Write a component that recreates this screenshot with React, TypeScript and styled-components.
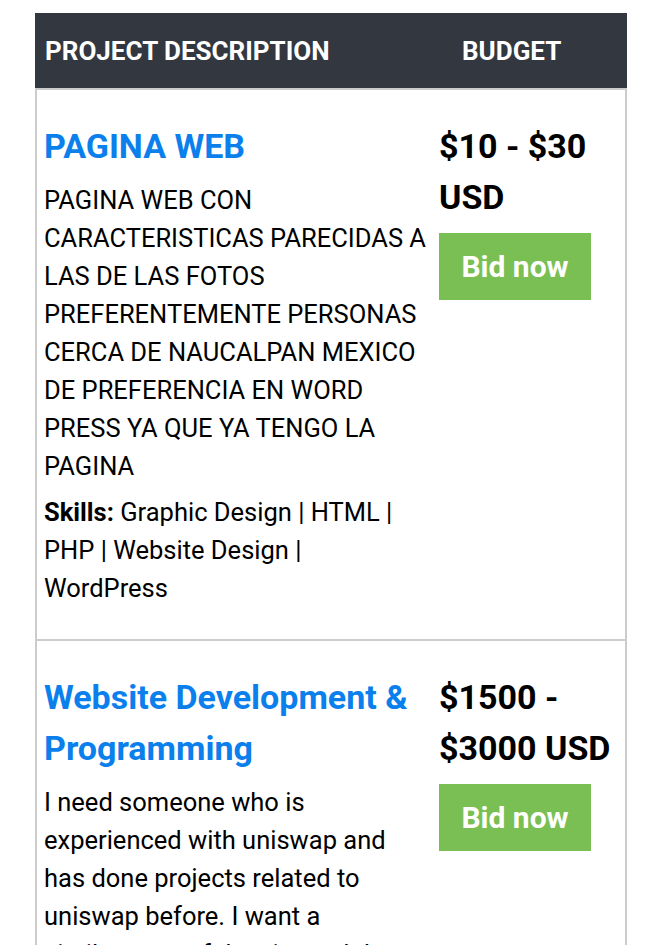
import React from "react";
import styled, { createGlobalStyle } from "styled-components";

const Global = createGlobalStyle`
  html, body { margin: 0; padding: 0; background: #ffffff; }
  body { font-family: Roboto, "Liberation Sans", Arial, sans-serif; color: #000; }
`;

const Page = styled.div`
  padding: 13px 22px 0 35px;
`;

const Table = styled.div`
  width: 592px;
  display: grid;
  grid-template-columns: 400px 192px;
`;

const HeadCell = styled.div<{ $pad: number }>`
  background: #333740;
  color: #ffffff;
  font-weight: 700;
  font-size: 26px;
  height: 76px;
  display: flex;
  align-items: center;
  padding-left: ${(p) => p.$pad}px;
`;

const Cell = styled.div<{ $left: boolean }>`
  border-left: ${(p) => (p.$left ? "2px solid #cccccc" : "none")};
  border-right: ${(p) => (p.$left ? "none" : "2px solid #cccccc")};
  border-top: 2px solid #cccccc;
  margin-top: -1px;
  padding-top: 31px;
  padding-bottom: 33px;
  padding-left: ${(p) => (p.$left ? "7px" : "4px")};
  padding-right: ${(p) => (p.$left ? "4px" : "6px")};
`;

const Title = styled.a`
  display: block;
  color: #0b7fec;
  font-weight: 700;
  font-size: 34px;
  line-height: 51px;
  text-decoration: none;
  margin-bottom: 9px;
`;

const Desc = styled.p<{ $max: number }>`
  margin: 0;
  max-width: ${(p) => p.$max}px;
  font-size: 25.5px;
  line-height: 38px;
`;

const Skills = styled.p`
  margin: 8px 0 0;
  font-size: 25.5px;
  line-height: 38px;
  b { font-weight: 700; }
`;

const Budget = styled.div`
  font-weight: 700;
  font-size: 34px;
  line-height: 51px;
`;

const BidButton = styled.button`
  margin-top: 10px;
  width: 152px;
  height: 67px;
  border: none;
  background: #79bf54;
  color: #ffffff;
  font-family: Roboto, "Liberation Sans", Arial, sans-serif;
  font-weight: 700;
  font-size: 30px;
  padding: 0;
  cursor: pointer;
`;

type Project = { title: string; desc: string; skills?: string; budget: string; descWidth: number };

const projects: Project[] = [
  {
    title: "PAGINA WEB",
    desc:
      "PAGINA WEB CON CARACTERISTICAS PARECIDAS A LAS DE LAS FOTOS PREFERENTEMENTE PERSONAS CERCA DE NAUCALPAN MEXICO DE PREFERENCIA EN WORD PRESS YA QUE YA TENGO LA PAGINA",
    skills: "Graphic Design | HTML | PHP | Website Design | WordPress",
    budget: "$10 - $30 USD",
    descWidth: 389,
  },
  {
    title: "Website Development & Programming",
    desc:
      "I need someone who is experienced with uniswap and has done projects related to uniswap before. I want a similar copy of the site and the smart contracts deployed on my own chain.",
    skills: "Blockchain | Ethereum | Solidity",
    budget: "$1500 - $3000 USD",
    descWidth: 355,
  },
];

export default function App() {
  return (
    <>
      <Global />
      <Page>
        <Table>
          <HeadCell $pad={10}>PROJECT DESCRIPTION</HeadCell>
          <HeadCell $pad={27}>BUDGET</HeadCell>
          {projects.map((p) => (
            <React.Fragment key={p.title}>
              <Cell $left>
                <Title href="#">{p.title}</Title>
                <Desc $max={p.descWidth}>{p.desc}</Desc>
                {p.skills && (
                  <Skills>
                    <b>Skills:</b> {p.skills}
                  </Skills>
                )}
              </Cell>
              <Cell $left={false}>
                <Budget>{p.budget}</Budget>
                <BidButton>Bid now</BidButton>
              </Cell>
            </React.Fragment>
          ))}
        </Table>
      </Page>
    </>
  );
}
